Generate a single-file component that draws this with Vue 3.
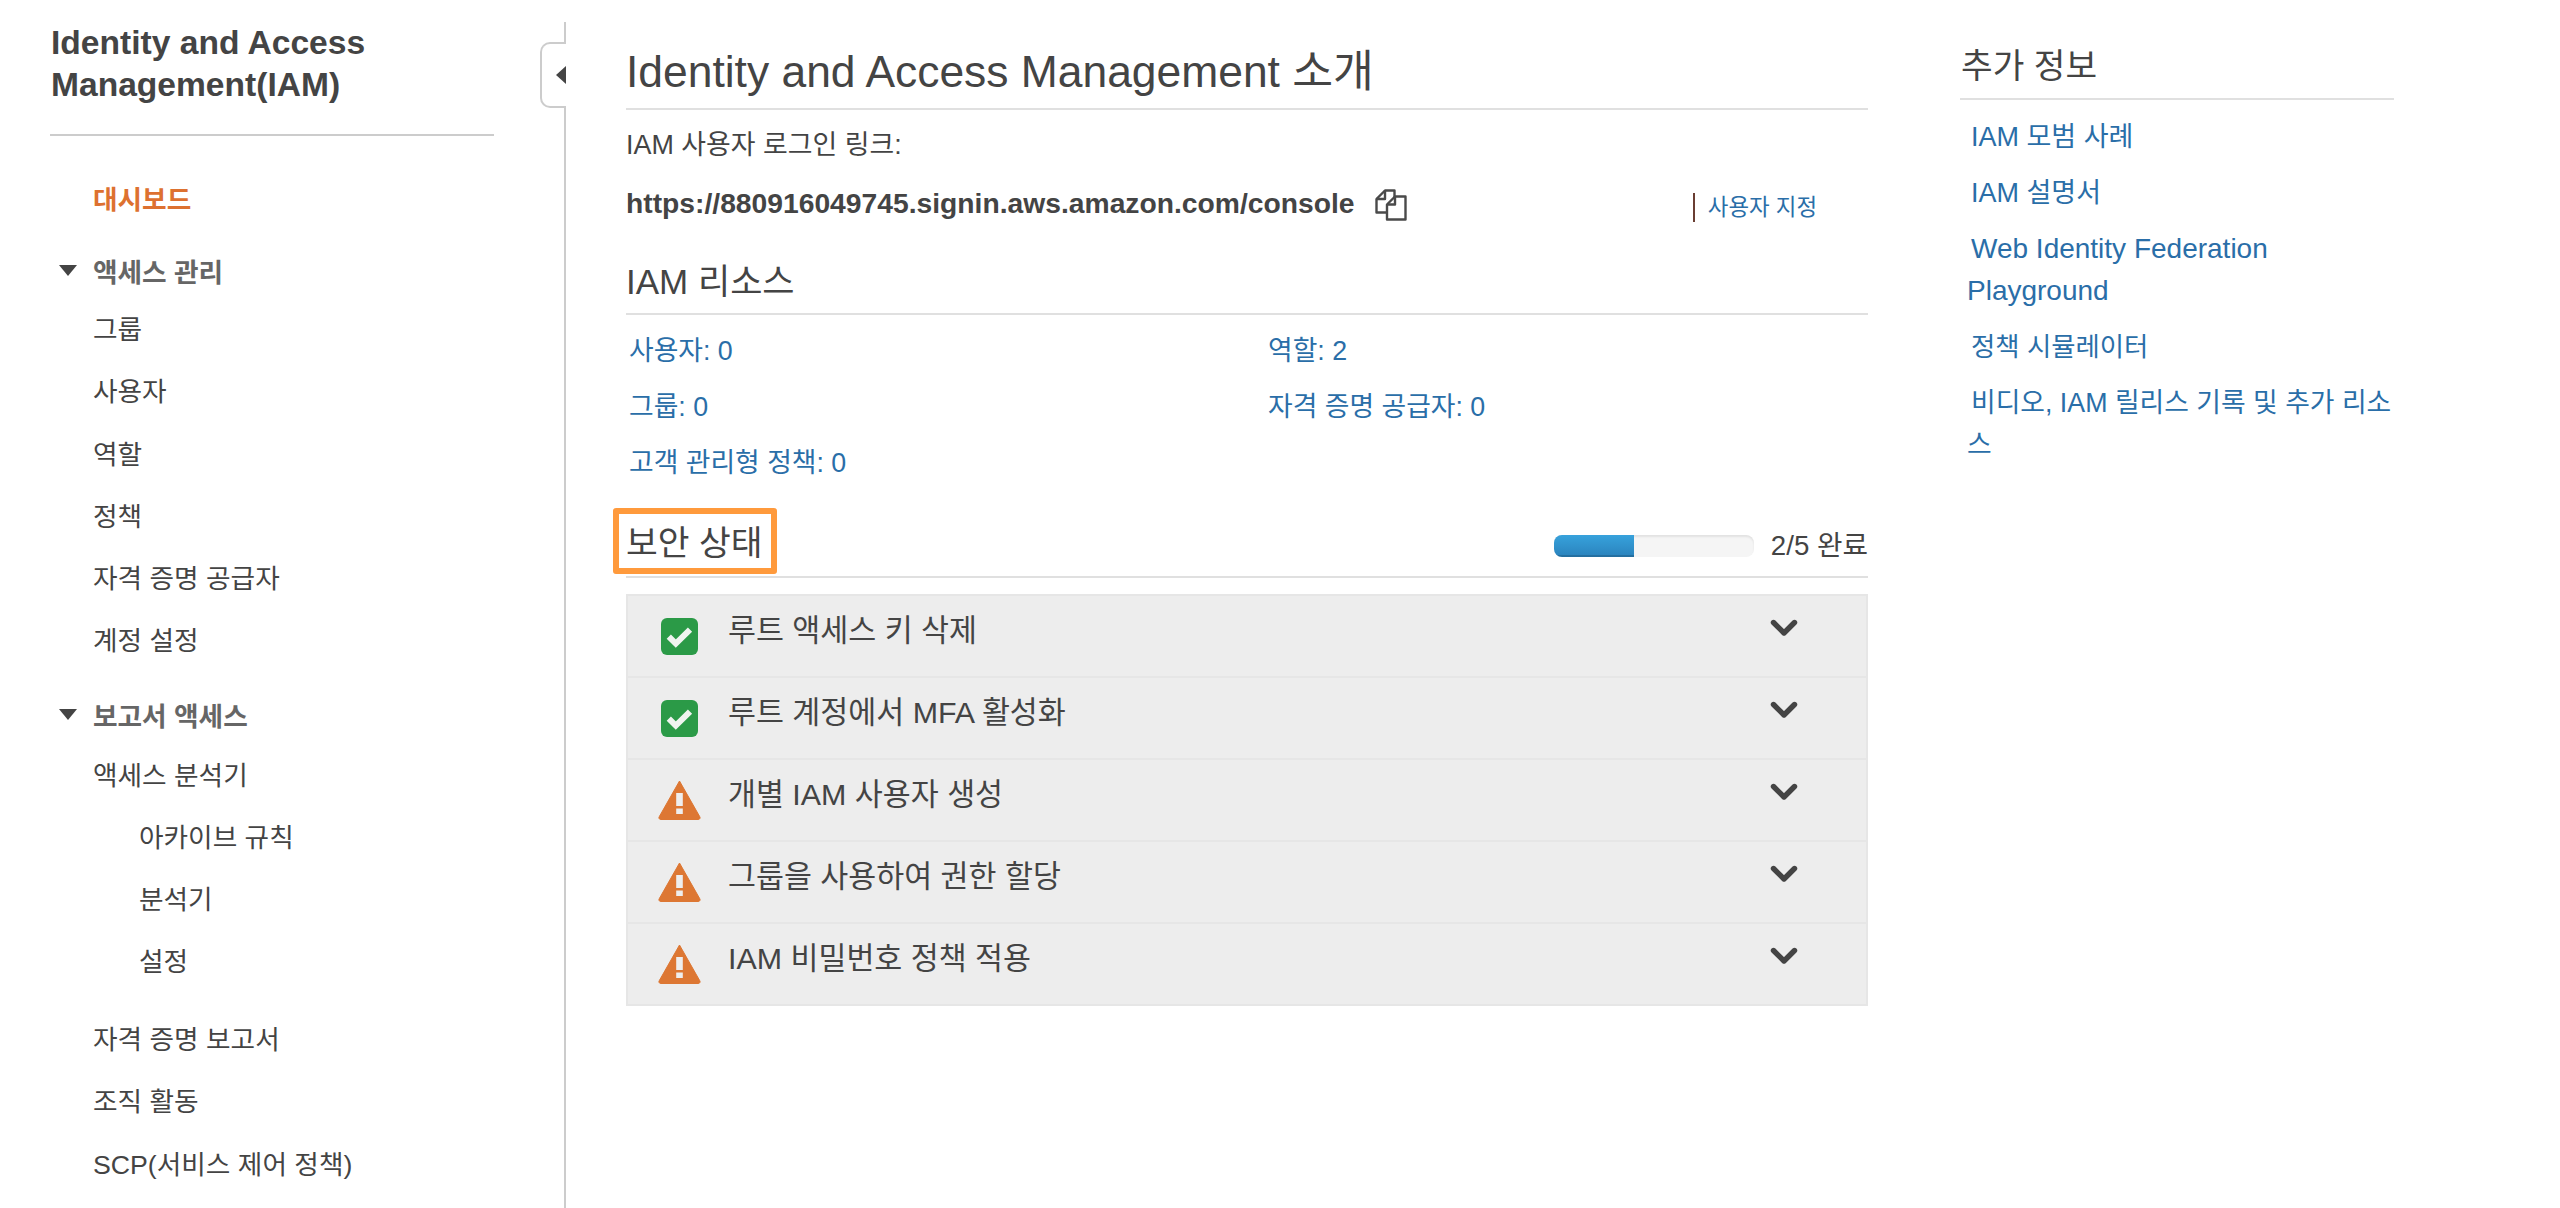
<script setup>
const mainLinks = ['사용자: 0', '역할: 2', '그룹: 0', '자격 증명 공급자: 0', '고객 관리형 정책: 0']
const checks = [
  { ok: true, label: '루트 액세스 키 삭제' },
  { ok: true, label: '루트 계정에서 MFA 활성화' },
  { ok: false, label: '개별 IAM 사용자 생성' },
  { ok: false, label: '그룹을 사용하여 권한 할당' },
  { ok: false, label: 'IAM 비밀번호 정책 적용' }
]
const asideLinks = [
  { text: 'IAM 모범 사례', kind: '' },
  { text: 'IAM 설명서', kind: '' },
  { text: 'Web Identity Federation\nPlayground', kind: 'latin' },
  { text: '정책 시뮬레이터', kind: 'tight' },
  { text: '비디오, IAM 릴리스 기록 및 추가 리소\n스', kind: 'wide' }
]
const accessItems = ['그룹', '사용자', '역할', '정책', '자격 증명 공급자', '계정 설정']
const analyzerItems = ['아카이브 규칙', '분석기', '설정']
const reportItems = ['자격 증명 보고서', '조직 활동', 'SCP(서비스 제어 정책)']
</script>

<template>
  <div class="page">
    <aside class="sidebar">
      <h1 class="side-title">Identity and Access Management(IAM)</h1>
      <nav class="nav">
        <a class="item active">대시보드</a>
        <div class="group first"><span class="caret"></span>액세스 관리</div>
        <a v-for="t in accessItems" :key="t" class="item">{{ t }}</a>
        <div class="group second"><span class="caret"></span>보고서 액세스</div>
        <a class="item">액세스 분석기</a>
        <a v-for="t in analyzerItems" :key="t" class="item sub">{{ t }}</a>
        <div class="spacer"></div>
        <a v-for="t in reportItems" :key="t" class="item">{{ t }}</a>
      </nav>
      <div class="tab"><span class="tab-arrow"></span></div>
    </aside>

    <main class="main">
      <h2 class="title">Identity and Access Management 소개</h2>
      <p class="login-label">IAM 사용자 로그인 링크:</p>
      <div class="url-row">
        <strong class="url">https://880916049745.signin.aws.amazon.com/console</strong>
        <svg class="copy" viewBox="0 0 32 32" width="32" height="32" fill="none" stroke="#4a4a4a" stroke-width="2.4" stroke-linejoin="round">
          <path d="M12 23.5H1.5V10L10 1.5h9.5V8" />
          <path d="M10 1.5V10H1.5" />
          <path d="M12 15.5L20 7.5h10.5v23H12z" fill="#fff" />
          <path d="M20 7.5V15.5H12" />
        </svg>
        <a class="customize">사용자 지정</a>
      </div>

      <h3 class="section">IAM 리소스</h3>
      <div class="res-grid">
        <a v-for="t in mainLinks" :key="t">{{ t }}</a>
      </div>

      <div class="sec-head">
        <h3 class="sec-title">보안 상태<span class="mark"></span></h3>
        <div class="progress"><div class="fill"></div></div>
        <span class="done">2/5 완료</span>
      </div>

      <div class="panel">
        <div v-for="c in checks" :key="c.label" class="row">
          <span class="icon">
            <svg v-if="c.ok" viewBox="0 0 37 37" width="37" height="37">
              <rect width="37" height="37" rx="6" fill="#2b9a47" />
              <path d="M7.8 18.6l7 7L29 11.6" fill="none" stroke="#f0f4f0" stroke-width="6" />
            </svg>
            <svg v-else viewBox="0 0 43 40" width="43" height="40">
              <path d="M21.5 1L41.7 36.6a1.8 1.8 0 0 1-1.5 2.9H2.8a1.8 1.8 0 0 1-1.5-2.9z" fill="#dd7733" stroke="#dd7733" stroke-width="1" stroke-linejoin="round" />
              <rect x="18.2" y="13" width="6.6" height="13" fill="#eeeeee" />
              <rect x="18.2" y="28.5" width="6.6" height="5.5" fill="#eeeeee" />
            </svg>
          </span>
          <span class="label">{{ c.label }}</span>
          <svg class="chev" viewBox="0 0 28 18" width="28" height="18">
            <path d="M3.5 3.5L14 14 24.5 3.5" fill="none" stroke="#444" stroke-width="5.4" stroke-linecap="round" stroke-linejoin="round" />
          </svg>
        </div>
      </div>
    </main>

    <aside class="info">
      <h3 class="info-title">추가 정보</h3>
      <ul class="info-list">
        <li v-for="l in asideLinks" :key="l.text" :class="l.kind">{{ l.text }}</li>
      </ul>
    </aside>
  </div>
</template>

<style>
html, body { margin: 0; background: #fff; }
</style>

<style scoped>
.page {
  display: flex;
  height: 1208px;
  width: 2560px;
  overflow: hidden;
  font-family: "Liberation Sans", "Noto Sans CJK KR", sans-serif;
  color: #444;
  background: #fff;
}
.sidebar {
  position: relative;
  box-sizing: border-box;
  width: 566px;
  margin-top: 22px;
  padding-left: 50px;
  padding-right: 70px;
  border-right: 2px solid #ccc;
  flex: none;
}
.side-title {
  margin: 0;
  padding: 0 0 28px 1px;
  font-size: 33.6px;
  line-height: 42px;
  font-weight: 700;
  color: #444;
  border-bottom: 2px solid #ccc;
}
.nav { display: flex; flex-direction: column; margin-top: 30px; }
.item {
  display: flex;
  align-items: center;
  height: 62.2px;
  padding-left: 43px;
  font-size: 26.7px;
  color: #444;
}
.item.sub { padding-left: 89px; }
.active { color: #dd7130; font-weight: 700; }
.group {
  display: flex;
  align-items: center;
  height: 50px;
  padding-left: 7px;
  font-size: 26.7px;
  font-weight: 700;
  color: #666;
}
.group.first { margin-top: 17px; margin-bottom: 1.5px; }
.group.second { margin-top: 19.5px; margin-bottom: 3px; }
.caret {
  width: 0;
  height: 0;
  margin-left: 2px;
  margin-right: 16px;
  border-left: 9.5px solid transparent;
  border-right: 9.5px solid transparent;
  border-top: 11px solid #444;
}
.spacer { height: 15.5px; }
.tab {
  position: absolute;
  top: 20px;
  right: -2px;
  box-sizing: border-box;
  width: 26px;
  height: 66px;
  display: flex;
  align-items: center;
  justify-content: flex-end;
  background: #fff;
  border: 2px solid #ccc;
  border-right: 0;
  border-radius: 10px 0 0 10px;
}
.tab-arrow {
  width: 0;
  height: 0;
  border-top: 9px solid transparent;
  border-bottom: 9px solid transparent;
  border-right: 10px solid #444;
}
.main {
  width: 1242px;
  margin-left: 60px;
  flex: none;
}
.title {
  margin: 47px 0 0;
  padding-bottom: 11px;
  font-size: 44.4px;
  line-height: 50px;
  font-weight: 400;
  color: #444;
  border-bottom: 2px solid #e0e0e0;
}
.login-label {
  margin: 15px 0 0;
  font-size: 26.9px;
  line-height: 40px;
}
.url-row {
  display: flex;
  align-items: center;
  height: 40px;
  margin-top: 18px;
}
.url { font-size: 28.25px; font-weight: 700; color: #444; }
.copy { margin-left: 20px; margin-top: 4px; flex: none; }
.customize {
  margin-left: auto;
  margin-right: 51px;
  margin-top: 8px;
  padding-left: 13px;
  border-left: 2px solid #6a3d32;
  height: 29px;
  line-height: 29px;
  font-size: 22.4px;
  color: #2a6ea8;
}
.section {
  margin: 37px 0 0;
  padding-bottom: 9px;
  font-size: 35px;
  line-height: 44px;
  font-weight: 400;
  border-bottom: 2px solid #e0e0e0;
}
.res-grid {
  display: grid;
  grid-template-columns: 639px 1fr;
  grid-auto-rows: 56px;
  align-items: center;
  margin-top: 5px;
  padding-left: 3px;
  font-size: 26.8px;
  color: #2a6ea8;
}
.sec-head {
  display: flex;
  align-items: center;
  height: 69px;
  margin-top: 19px;
  border-bottom: 2px solid #e0e0e0;
}
.sec-title {
  position: relative;
  margin: 0 auto 0 0;
  padding-top: 2px;
  font-size: 34.5px;
  line-height: 66px;
  font-weight: 400;
}
.mark {
  position: absolute;
  top: 0;
  left: -13px;
  width: 164px;
  height: 66px;
  box-sizing: border-box;
  border: 6px solid #ff9a3c;
  border-radius: 3px;
}
.progress {
  position: relative;
  width: 200px;
  height: 22px;
  margin-top: 8px;
  background: #f5f5f5;
  border-radius: 8px;
  box-shadow: inset 0 2px 2px rgba(0, 0, 0, 0.08);
  overflow: hidden;
}
.fill {
  width: 40%;
  height: 100%;
  background: linear-gradient(#37a2dc, #2a82bc);
  box-shadow: inset 0 -2px 0 rgba(0, 0, 0, 0.15);
}
.done {
  margin-left: 16.5px;
  margin-top: 8px;
  font-size: 27.7px;
  line-height: 34px;
}
.panel {
  margin-top: 16px;
  box-sizing: border-box;
  border: 2px solid #e6e6e6;
  border-bottom: 0;
  background: #ededed;
}
.row {
  display: flex;
  align-items: center;
  box-sizing: border-box;
  height: 82px;
  border-bottom: 2px solid #e6e6e6;
  padding-left: 30px;
}
.icon {
  display: flex;
  justify-content: center;
  width: 43px;
  flex: none;
}
.label {
  margin-left: 27px;
  padding-bottom: 12px;
  font-size: 30.4px;
  line-height: 40px;
}
.chev {
  margin-left: auto;
  margin-right: 68px;
  margin-bottom: 16px;
}
.info {
  width: 434px;
  margin-left: 92px;
  flex: none;
}
.info-title {
  margin: 44px 0 0;
  padding: 0 0 10px 1px;
  font-size: 34.4px;
  line-height: 44px;
  font-weight: 400;
  border-bottom: 2px solid #e0e0e0;
}
.info-list {
  list-style: none;
  margin: 15.5px 0 0;
  padding: 0 0 0 7px;
  display: flex;
  flex-direction: column;
  gap: 14px;
  font-size: 27px;
  line-height: 42px;
  color: #2a6ea8;
}
.info-list li { white-space: pre; text-indent: 4px; }
.info-list li.latin { font-size: 28px; }
.info-list li.tight { font-size: 26.4px; }
.info-list li.wide { font-size: 26.8px; }
</style>
